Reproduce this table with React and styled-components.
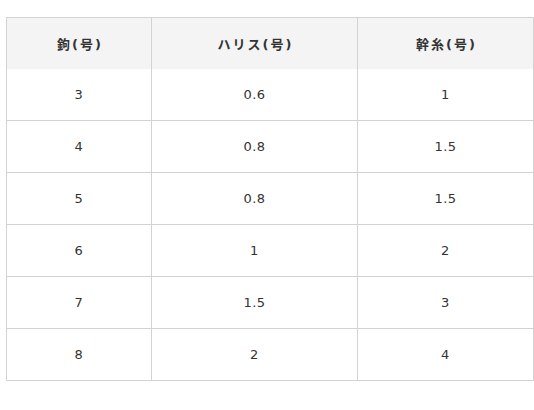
import React from "react";
import styled, { createGlobalStyle } from "styled-components";

const Global = createGlobalStyle`
  html, body { margin: 0; padding: 0; background: #fff; }
  body { font-family: "DejaVu Sans", "Noto Sans CJK JP", sans-serif; color: #333; }
`;

const Wrap = styled.div`
  padding: 17px 0 0 6px;
`;

const Table = styled.table`
  border-collapse: separate;
  border-spacing: 0;
  border-top: 1px solid #d3d3d3;
  border-left: 1px solid #d3d3d3;
  width: 528px;
  table-layout: fixed;
  font-size: 13px;
`;

const Th = styled.th`
  background: #f4f4f4;
  border-right: 1px solid #d3d3d3;
  height: 51px;
  padding: 0 0 0 2px;
  font-weight: bold;
  text-align: center;
  letter-spacing: 2px;
  color: #333;
`;

const Td = styled.td`
  border-right: 1px solid #d3d3d3;
  border-bottom: 1px solid #d3d3d3;
  height: 51px;
  padding: 0;
  text-align: center;
  letter-spacing: 0.5px;
  color: #333;
`;

const rows = [
  ["3", "0.6", "1"],
  ["4", "0.8", "1.5"],
  ["5", "0.8", "1.5"],
  ["6", "1", "2"],
  ["7", "1.5", "3"],
  ["8", "2", "4"],
];

export default function App() {
  return (
    <Wrap>
      <Global />
      <Table>
        <colgroup>
          <col style={{ width: 145 }} />
          <col style={{ width: 206 }} />
          <col style={{ width: 176 }} />
        </colgroup>
        <thead>
          <tr>
            <Th>鉤(号)</Th>
            <Th>ハリス(号)</Th>
            <Th>幹糸(号)</Th>
          </tr>
        </thead>
        <tbody>
          {rows.map((r, i) => (
            <tr key={i}>
              {r.map((c, j) => (
                <Td key={j}>{c}</Td>
              ))}
            </tr>
          ))}
        </tbody>
      </Table>
    </Wrap>
  );
}
